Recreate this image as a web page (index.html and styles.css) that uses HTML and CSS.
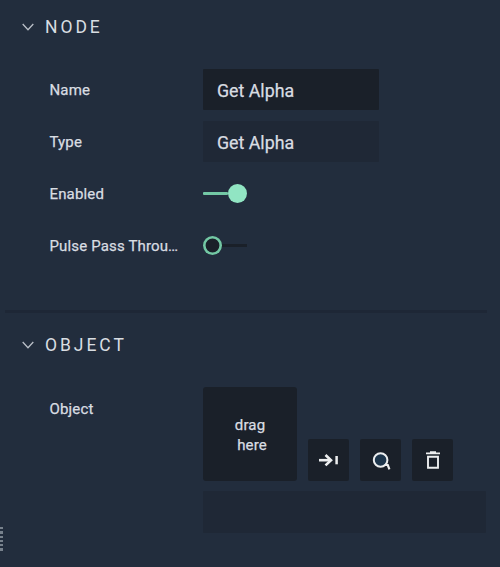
FILE: index.html
```html
<!DOCTYPE html>
<html lang="en">
<head>
<meta charset="utf-8">
<title>Node properties</title>
<link rel="stylesheet" href="styles.css">
</head>
<body>
<main class="panel">
  <section class="section">
    <h2 class="heading">
      <svg class="chevron" viewBox="0 0 12 8"><path d="M.7 1 6 6.7 11.3 1"/></svg>
      <span>NODE</span>
    </h2>
    <div class="rows">
      <div class="row"><span class="label">Name</span><div class="field editable"><span>Get Alpha</span></div></div>
      <div class="row"><span class="label">Type</span><div class="field"><span>Get Alpha</span></div></div>
      <div class="row"><span class="label">Enabled</span><div class="toggle on"><i class="knob"></i><i class="track"></i></div></div>
      <div class="row"><span class="label">Pulse Pass Throu…</span><div class="toggle"><i class="knob"></i><i class="track"></i></div></div>
    </div>
  </section>
  <hr class="divider">
  <section class="section object">
    <h2 class="heading">
      <svg class="chevron" viewBox="0 0 12 8"><path d="M.7 1 6 6.7 11.3 1"/></svg>
      <span>OBJECT</span>
    </h2>
    <div class="object-row">
      <span class="label">Object</span>
      <div class="picker">
        <div class="tools">
          <div class="drop"><span>drag</span><span class="second">here</span></div>
          <button class="tool" aria-label="Use selected"><svg viewBox="0 0 41 42"><path class="arrow" d="M11 21.2H23"/><path class="arrow" d="M17.5 16 23 21.2 17.5 26.4"/><path class="bar" d="M28.6 17V25.3"/></svg></button>
          <button class="tool" aria-label="Find"><svg viewBox="0 0 41 42"><circle class="lens" cx="20.6" cy="21" r="6.8"/><path class="handle" d="M24.8 26H27.8L29.4 30.3"/></svg></button>
          <button class="tool" aria-label="Delete"><svg viewBox="0 0 41 42"><path class="lid" d="M14 14.3H28M18 13H24"/><path class="bin" d="M16 17.7H26V28.7H16Z"/></svg></button>
        </div>
        <div class="value"></div>
      </div>
    </div>
  </section>
  <div class="grip"><i></i><i></i><i></i><i></i><i></i><i></i></div>
</main>
</body>
</html>
```
FILE: styles.css
```css
* { box-sizing: border-box; }
body {
  margin: 0;
  background: #222d3d;
  color: #d9dde2;
  font-family: Roboto, "Liberation Sans", sans-serif;
}
.panel { position: relative; height: 567px; overflow: hidden; }
.section { height: 310px; padding-top: 14px; }
.heading {
  display: flex;
  align-items: center;
  height: 26px;
  margin: 0;
  padding-left: 22px;
  gap: 11px;
  font-size: 17.5px;
  font-weight: 400;
  letter-spacing: 2.95px;
}
.chevron { width: 12px; height: 8px; fill: none; stroke: #b9bfc7; stroke-width: 1.3; }
.rows { display: grid; gap: 11px; margin-top: 29px; padding-left: 49.5px; }
.row { display: flex; align-items: center; height: 41px; }
.label {
  width: 135px;
  margin-right: 18.5px;
  flex: none;
  padding-top: 1px;
  white-space: nowrap;
  font-size: 15px;
  letter-spacing: .15px;
  line-height: 20px;
  -webkit-text-stroke: .25px currentColor;
}
.field {
  display: flex;
  align-items: center;
  width: 176px;
  height: 41px;
  padding: 1px 0 0 14px;
  background: #1f2836;
  border-radius: 1px;
  font-size: 17.8px;
  -webkit-text-stroke: .25px currentColor;
}
.editable { background: #1a2029; }
.toggle { display: flex; align-items: center; width: 44px; }
.knob { width: 19px; height: 19px; border-radius: 50%; background: #1a2029; box-shadow: inset 0 0 0 2.6px #73c8a5; }
.track { flex: 1; height: 3px; background: #1a2029; }
.on { flex-direction: row-reverse; }
.on .knob { box-shadow: none; background: #91e5c3; }
.on .track { background: #73c8a5; border-radius: 1px; }
.divider { width: 482px; height: 3px; margin: 0 0 0 5px; border: 0; background: #1e2736; }
.object { height: 254px; padding-top: 19px; }
.object-row { display: flex; margin-top: 29px; padding-left: 49.5px; }
.object-row .label { margin-top: 11px; }
.picker { width: 283px; }
.tools { display: flex; align-items: flex-end; gap: 11px; }
.drop {
  display: flex;
  flex-direction: column;
  align-items: center;
  justify-content: center;
  width: 94px;
  height: 94px;
  padding-top: 2px;
  border-radius: 3px;
  background: #1a2029;
  font-size: 15px;
  letter-spacing: .15px;
  line-height: 20px;
  -webkit-text-stroke: .25px currentColor;
}
.second { margin-left: 4px; }
.tool { width: 41px; height: 42px; padding: 0; border: 0; border-radius: 2px; background: #1a2029; }
.tool svg { display: block; width: 41px; height: 42px; fill: none; stroke: #eceeef; }
.arrow { stroke-width: 2.6; }
.bar { stroke-width: 2.5; }
.lens { stroke-width: 2; fill: #1d354b; }
.handle { stroke-width: 2.2; }
.lid { stroke-width: 1.7; }
.bin { stroke-width: 1.9; }
.value { height: 42px; margin-top: 10px; background: #1f2836; border-radius: 1px; }
.grip { position: absolute; left: 0; top: 527px; display: grid; gap: 2px; }
.grip i { width: 3px; height: 2.3px; background: #77818c; }
```
